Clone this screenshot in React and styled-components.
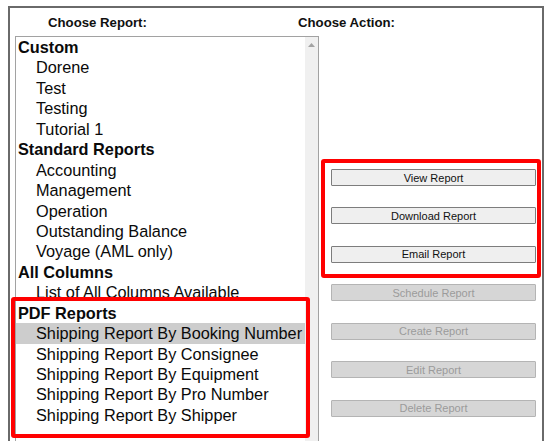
import React from "react";
import styled, { createGlobalStyle } from "styled-components";

const Global = createGlobalStyle`
  html, body { margin: 0; padding: 0; background: #fff; overflow: hidden; }
  body { font-family: "Liberation Sans", Arial, sans-serif; color: #000; }
`;

const Page = styled.div`
  position: relative;
  width: 550px;
  height: 441px;
  overflow: hidden;
`;

const Frame = styled.div`
  position: absolute;
  left: 8px;
  top: 6px;
  width: 532px;
  height: 460px;
  border: 2px solid #6a6a6a;
  border-bottom: none;
`;

const HeaderRow = styled.div`
  display: flex;
  height: 28px;
  padding-left: 38px;
  align-items: flex-start;
`;

const HeadLabel = styled.div`
  width: ${(p) => p.$w || "auto"};
  font-size: 13.2px;
  font-weight: bold;
  line-height: 15px;
  padding-top: 7px;
  color: #111;
`;

const Body = styled.div`
  display: flex;
  align-items: flex-start;
`;

const ListBox = styled.div`
  margin-left: 5px;
  width: 302px;
  height: 430px;
  border: 1px solid #a2a2a2;
  display: flex;
  background: #fff;
`;

const ListItems = styled.div`
  flex: 1;
  padding-top: 0;
`;

const Row = styled.div`
  height: 20.45px;
  line-height: 20.45px;
  font-size: 16.3px;
  white-space: nowrap;
  font-weight: ${(p) => (p.$group ? "bold" : "normal")};
  padding-left: ${(p) => (p.$group ? "2px" : "20px")};
  background: ${(p) => (p.$selected ? "#cdcdcd" : "transparent")};
  color: #0a0a0a;
`;

const Scrollbar = styled.div`
  width: 13px;
  background: #f0f0f0;
  display: flex;
  justify-content: center;
  padding-top: 6px;
  box-sizing: border-box;
`;

const Actions = styled.div`
  display: flex;
  flex-direction: column;
  gap: 21.45px;
  padding-top: 133px;
  padding-left: 12px;
`;

const ActionButton = styled.div`
  box-sizing: border-box;
  width: 205px;
  height: 17px;
  display: flex;
  align-items: center;
  justify-content: center;
  font-size: 11px;
  border: 1px solid ${(p) => (p.$disabled ? "#b4b4b4" : "#7d7d7d")};
  background: ${(p) => (p.$disabled ? "#d6d6d6" : "#efefef")};
  color: ${(p) => (p.$disabled ? "#9b9b9b" : "#111")};
  border-radius: 1px;
`;

const Highlight = styled.div`
  position: absolute;
  left: ${(p) => p.$x}px;
  top: ${(p) => p.$y}px;
  width: ${(p) => p.$w}px;
  height: ${(p) => p.$h}px;
  box-sizing: border-box;
  border: 4px solid #ff0000;
  border-radius: 3px;
  pointer-events: none;
`;

const groups = [
  { label: "Custom", items: ["Dorene", "Test", "Testing", "Tutorial 1"] },
  {
    label: "Standard Reports",
    items: ["Accounting", "Management", "Operation", "Outstanding Balance", "Voyage (AML only)"],
  },
  { label: "All Columns", items: ["List of All Columns Available"] },
  {
    label: "PDF Reports",
    items: [
      "Shipping Report By Booking Number",
      "Shipping Report By Consignee",
      "Shipping Report By Equipment",
      "Shipping Report By Pro Number",
      "Shipping Report By Shipper",
    ],
  },
];

const actions = [
  { label: "View Report" },
  { label: "Download Report" },
  { label: "Email Report" },
  { label: "Schedule Report", disabled: true },
  { label: "Create Report", disabled: true },
  { label: "Edit Report", disabled: true },
  { label: "Delete Report", disabled: true },
];

export default function App() {
  return (
    <Page>
      <Global />
      <Frame>
        <HeaderRow>
          <HeadLabel $w="250px">Choose Report:</HeadLabel>
          <HeadLabel>Choose Action:</HeadLabel>
        </HeaderRow>
        <Body>
          <ListBox>
            <ListItems>
              {groups.map((g) => (
                <React.Fragment key={g.label}>
                  <Row $group>{g.label}</Row>
                  {g.items.map((it) => (
                    <Row key={it} $selected={it === "Shipping Report By Booking Number"}>
                      {it}
                    </Row>
                  ))}
                </React.Fragment>
              ))}
            </ListItems>
            <Scrollbar>
              <svg width="7" height="4" viewBox="0 0 7 4">
                <polygon points="0,4 3.5,0 7,4" fill="#a3a3a3" />
              </svg>
            </Scrollbar>
          </ListBox>
          <Actions>
            {actions.map((a) => (
              <ActionButton key={a.label} $disabled={a.disabled}>
                {a.label}
              </ActionButton>
            ))}
          </Actions>
        </Body>
      </Frame>
      <Highlight $x={11} $y={297} $w={299} $h={141} />
      <Highlight $x={321} $y={159} $w={220} $h={119} />
    </Page>
  );
}
